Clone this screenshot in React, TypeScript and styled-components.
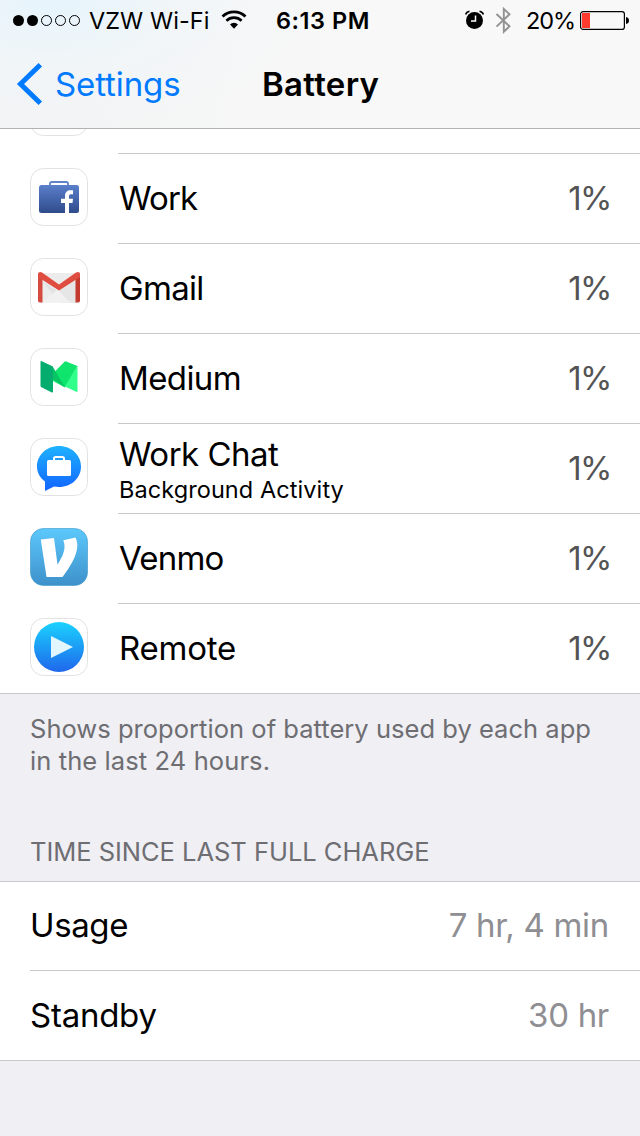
import React from "react";
import styled, { createGlobalStyle } from "styled-components";

const GlobalStyle = createGlobalStyle`
  *, *::before, *::after { box-sizing: border-box; }
  html, body { margin: 0; padding: 0; background: #efeff4; }
  body {
    font-family: Inter, "Liberation Sans", sans-serif;
    color: #000;
    -webkit-font-smoothing: antialiased;
  }
`;

const Screen = styled.main`
  width: 640px;
  height: 1136px;
  display: flex;
  flex-direction: column;
  overflow: hidden;
  background: #efeff4;
`;

const Header = styled.header`
  height: 129px;
  flex: none;
  border-bottom: 1px solid #b2b2b2;
  background: radial-gradient(ellipse 260px 130px at 50px 0, #e6f4fc 0%, rgba(240, 246, 249, 0.7) 50%, rgba(246, 246, 246, 0) 100%),
    linear-gradient(90deg, #f2f3f4 0%, #f8f8f8 55%, #f8f8f8 100%);
`;

const Label = styled.span<{ $size: number; $spacing?: number; $weight?: number; $color?: string }>`
  font-size: ${(p) => p.$size}px;
  letter-spacing: ${(p) => p.$spacing ?? 0}px;
  font-weight: ${(p) => p.$weight ?? 400};
  color: ${(p) => p.$color ?? "#000"};
  line-height: 40px;
  white-space: nowrap;
`;

const StatusBar = styled.div`
  height: 40px;
  display: grid;
  grid-template-columns: 264px 1fr 176px;
  align-items: center;
`;

const StatusLabel = styled(Label)`
  line-height: 38px;
  margin-top: 2px;
`;

const Carrier = styled.div`
  display: flex;
  align-items: center;
  padding-left: 12px;
  svg { flex: none; }
`;

const CarrierName = styled(StatusLabel)`
  width: 125px;
  margin-left: 8px;
  margin-right: 7px;
`;

const Clock = styled.div`
  padding-left: 12px;
  display: flex;
`;

const Indicators = styled.div`
  display: flex;
  align-items: center;
  gap: 10px;
  padding-left: 1px;
  svg { flex: none; }
`;

const Percent = styled(StatusLabel)`
  width: 44px;
  margin-left: 4px;
`;

const NavBar = styled.nav`
  height: 88px;
  display: grid;
  grid-template-columns: 262px 1fr;
  align-items: center;
`;

const BackButton = styled.button`
  display: flex;
  align-items: center;
  gap: 12px;
  padding: 0 0 0 16px;
  border: 0;
  background: none;
  font-family: inherit;
`;

const Title = styled.h1`
  margin: 0;
  display: flex;
`;

const AppList = styled.section`
  height: 565px;
  flex: none;
  display: flex;
  flex-direction: column;
  justify-content: flex-end;
  overflow: hidden;
  background: #fff;
  border-bottom: 1px solid #c8c7cc;
`;

const AppRow = styled.div<{ $last?: boolean }>`
  height: ${(p) => (p.$last ? 89 : 90)}px;
  flex: none;
  display: grid;
  grid-template-columns: 58px 1fr;
  column-gap: 30px;
  padding-left: 30px;
`;

const AppIcon = styled.svg`
  width: 58px;
  height: 58px;
  margin-top: 14px;
`;

const AppBody = styled.div<{ $last?: boolean }>`
  display: flex;
  justify-content: space-between;
  align-items: center;
  padding: 0 29px 2px 1px;
  border-bottom: ${(p) => (p.$last ? "0" : "1px solid #c8c7cc")};
`;

const AppText = styled.div<{ $double?: boolean }>`
  display: flex;
  flex-direction: column;
  padding-top: ${(p) => (p.$double ? 7 : 0)}px;
`;

const AppName = styled(Label)<{ $compact?: boolean }>`
  line-height: ${(p) => (p.$compact ? 38 : 40)}px;
`;

const Activity = styled(Label)`
  line-height: 34px;
`;

const Notes = styled.section`
  height: 187px;
  flex: none;
  display: flex;
  flex-direction: column;
  justify-content: space-between;
  padding: 19px 30px 9px;
`;

const Footnote = styled.p`
  margin: 0;
  display: flex;
  flex-direction: column;
`;

const NoteLine = styled(Label)`
  line-height: 32px;
`;

const Totals = styled.section`
  flex: none;
  background: #fff;
  border-top: 1px solid #c8c7cc;
  border-bottom: 1px solid #c8c7cc;
`;

const TotalRow = styled.div<{ $first?: boolean }>`
  height: 89px;
  margin-left: 30px;
  padding: 0 31px 2px 0;
  display: flex;
  justify-content: space-between;
  align-items: center;
  border-bottom: ${(p) => (p.$first ? "1px solid #c8c7cc" : "0")};
`;

const Tile = () => <rect x="0.5" y="0.5" width="57" height="57" rx="13" fill="#fff" stroke="#e2e2e3" />;

const WorkArt = () => (
  <>
    <defs>
      <linearGradient id="work" x1="0" y1="0" x2="0" y2="1">
        <stop offset="0" stopColor="#5b7fcb" />
        <stop offset="1" stopColor="#2f4b8b" />
      </linearGradient>
    </defs>
    <Tile />
    <path d="M20 18v-2.200q0-1.800 1.800-1.800h14.400q1.800 0 1.800 1.800V18" fill="none" stroke="#5f83cc" strokeWidth="1.800" />
    <rect x="9" y="17" width="40" height="28" rx="2.500" fill="url(#work)" />
    <path d="M35 45V34.900h-4v-4.200h4v-2.700c0-3.800 2.300-5.700 5.500-5.700H43v4h-2c-1.500 0-2 .7-2 2v2.400h4l-.5 4.200H39V45z" fill="#fff" />
  </>
);

const GmailArt = () => (
  <>
    <Tile />
    <path d="M8 15h42v29.500H8z" fill="#ececec" />
    <path d="M12 23 29 34 46 23V44.500H30z" fill="#e2e2e2" />
    <path d="M12 44.500 27 32l3 2 16 10.500z" fill="#f1f1f1" />
    <path d="M29 33 46 22V44.500H40z" fill="#e6e6e6" />
    <path d="M8 17.500 12.500 20V44.500H10q-2 0-2-2z" fill="#d54b3f" />
    <path d="M50 17.500 45.500 20V44.500H48q2 0 2-2z" fill="#c53a2f" />
    <path d="M8 19V16Q8 14 10.500 14L12 14.500 29 26.500 46 14.500Q50 13 50 16V19L29 32.500z" fill="#df4d40" />
  </>
);

const MediumArt = () => (
  <>
    <Tile />
    <path d="M23 25.500 34.500 13.700q.8-.7 1.600-.3L47.500 18 35 39.500 23 33z" fill="#0fe46c" />
    <path d="M47.500 18V43q0 1.500-1.300.8L35 38.500z" fill="#31ff8c" />
    <path d="M23 19v12l12 8.500z" fill="#07c565" />
    <path d="M10.500 14q0-1.300 1.300-.8L23 18.500V43.500q0 1.500-1.200.9L11.500 39.300q-1-.5-1-1.500z" fill="#04ac6d" />
  </>
);

const WorkChatArt = () => (
  <>
    <defs>
      <linearGradient id="chat" x1="0" y1="0" x2="0" y2="1">
        <stop offset="0" stopColor="#1eb2ff" />
        <stop offset="1" stopColor="#1264ff" />
      </linearGradient>
    </defs>
    <Tile />
    <path d="M29 8C16.500 8 7 17 7 28.500c0 6 3 11.500 8 15V53l9-4.500c1.500.3 3.300.5 5 .5 12.500 0 22-9 22-20.500S41.500 8 29 8z" fill="url(#chat)" />
    <path d="M24 23v-2.500q0-1.500 1.500-1.500h7q1.500 0 1.500 1.500V23" fill="none" stroke="#fff" strokeWidth="2" />
    <rect x="17" y="22" width="24" height="16" rx="1.500" fill="#fff" />
  </>
);

const VenmoArt = () => (
  <>
    <defs>
      <linearGradient id="venmo" x1="0" y1="0" x2="0" y2="1">
        <stop offset="0" stopColor="#5cc8fb" />
        <stop offset="1" stopColor="#3e91cb" />
      </linearGradient>
    </defs>
    <rect x="0.5" y="0.5" width="57" height="57" rx="13" fill="url(#venmo)" stroke="#429bcd" strokeOpacity="0.65" />
    <path d="M10.800 11.500 24 10l3.500 26.500C31 31 34.500 25 34.500 18.500c0-2.500-.4-4.500-1.300-6.300L45.500 9.500c1 2 1.800 4.600 1.800 8 0 10.500-8 22.500-14.800 31.500H16.500z" fill="#fff" />
  </>
);

const RemoteArt = () => (
  <>
    <defs>
      <linearGradient id="remote" x1="0" y1="0" x2="0" y2="1">
        <stop offset="0" stopColor="#1ad2fe" />
        <stop offset="1" stopColor="#1f67ec" />
      </linearGradient>
    </defs>
    <Tile />
    <circle cx="29" cy="29" r="25" fill="url(#remote)" />
    <path d="M21 18 43 29 21 40z" fill="#e1f6fd" />
  </>
);

type App = { name: string; spacing: number; art: React.ReactNode; activity?: string };

const apps: App[] = [
  { name: "Work", spacing: -0.85, art: <WorkArt /> },
  { name: "Gmail", spacing: -0.7, art: <GmailArt /> },
  { name: "Medium", spacing: -0.6, art: <MediumArt /> },
  { name: "Work Chat", spacing: -0.5, art: <WorkChatArt />, activity: "Background Activity" },
  { name: "Venmo", spacing: -0.8, art: <VenmoArt /> },
  { name: "Remote", spacing: -0.25, art: <RemoteArt /> },
];

export default function App() {
  return (
    <Screen>
      <GlobalStyle />
      <Header>
        <StatusBar>
          <Carrier>
            <svg width="69" height="14" viewBox="0 0 69 14">
              <circle cx="6.500" cy="7.500" r="5.500" />
              <circle cx="20.500" cy="7.500" r="5.500" />
              {[34.5, 48.5, 62.5].map((x) => (
                <circle key={x} cx={x} cy="7.500" r="5" fill="none" stroke="#000" strokeWidth="1" />
              ))}
            </svg>
            <CarrierName $size={23.5} $spacing={0.05}>VZW Wi-Fi</CarrierName>
            <svg width="26" height="20" viewBox="0 0 26 20">
              <path d="M1.500 6.600a16.500 16.500 0 0 1 23 0" fill="none" stroke="#000" strokeWidth="2.800" />
              <path d="M5.400 10.700a11 11 0 0 1 15.200 0" fill="none" stroke="#000" strokeWidth="2.600" />
              <path d="M9 14.400a5.800 5.800 0 0 1 8 0L13 18.700z" />
            </svg>
          </Carrier>
          <Clock>
            <StatusLabel $size={23.5} $weight={600} $spacing={0.55}>6:13 PM</StatusLabel>
          </Clock>
          <Indicators>
            <svg width="20" height="20" viewBox="0 0 20 20">
              <circle cx="9.500" cy="10.500" r="8.500" />
              <path d="M.6 4.500Q1.500 1.800 4.500 1.300M14.500 1.300q3 .5 3.900 3.200" fill="none" stroke="#000" strokeWidth="1.600" />
              <path d="M10.500 5.500V11H6" fill="none" stroke="#fff" strokeWidth="1.500" />
            </svg>
            <svg width="17" height="28" viewBox="0 0 17 28">
              <path d="M1.500 8 14.500 20.300 8.800 25.700V2.900l5.700 5.400L1.500 20.600" fill="none" stroke="#929292" strokeWidth="1.900" />
            </svg>
            <Percent $size={23.5} $spacing={-1.1}>20%</Percent>
            <svg width="50" height="20" viewBox="0 0 50 20">
              <rect x="0.600" y="1.600" width="43.800" height="17.800" rx="2.500" fill="none" stroke="#000" strokeWidth="1.200" />
              <rect x="2" y="3" width="8" height="15" fill="#ff3b30" />
              <path d="M46 7q3 .5 3 3.500T46 14z" />
            </svg>
          </Indicators>
        </StatusBar>
        <NavBar>
          <BackButton>
            <svg width="27" height="44" viewBox="0 0 27 44">
              <path d="M24.300 2.700 4.500 22l19.800 19.300" fill="none" stroke="#007aff" strokeWidth="5" />
            </svg>
            <Label $size={33} $spacing={-0.1} $color="#007aff">Settings</Label>
          </BackButton>
          <Title>
            <Label $size={33} $weight={600} $spacing={0.3}>Battery</Label>
          </Title>
        </NavBar>
      </Header>

      <AppList>
        <AppRow>
          <AppIcon viewBox="0 0 58 58"><Tile /></AppIcon>
          <AppBody />
        </AppRow>
        {apps.map((app, i) => {
          const last = i === apps.length - 1;
          return (
            <AppRow key={app.name} $last={last}>
              <AppIcon viewBox="0 0 58 58">{app.art}</AppIcon>
              <AppBody $last={last}>
                <AppText $double={!!app.activity}>
                  <AppName $size={33} $spacing={app.spacing} $compact={!!app.activity}>{app.name}</AppName>
                  {app.activity && <Activity $size={23.5} $spacing={0.08}>{app.activity}</Activity>}
                </AppText>
                <Label $size={33} $spacing={-1.5} $color="#545454">1%</Label>
              </AppBody>
            </AppRow>
          );
        })}
      </AppList>

      <Notes>
        <Footnote>
          <NoteLine $size={25.5} $spacing={0.03} $color="#6d6d72">Shows proportion of battery used by each app</NoteLine>
          <NoteLine $size={25.5} $spacing={0.1} $color="#6d6d72">in the last 24 hours.</NoteLine>
        </Footnote>
        <Label $size={25.5} $spacing={-0.03} $color="#6d6d72">TIME SINCE LAST FULL CHARGE</Label>
      </Notes>

      <Totals>
        <TotalRow $first>
          <Label $size={33} $spacing={-0.4}>Usage</Label>
          <Label $size={33} $spacing={-0.3} $color="#8e8e93">7 hr, 4 min</Label>
        </TotalRow>
        <TotalRow>
          <Label $size={33} $spacing={-0.25}>Standby</Label>
          <Label $size={33} $spacing={-0.3} $color="#8e8e93">30 hr</Label>
        </TotalRow>
      </Totals>
    </Screen>
  );
}
